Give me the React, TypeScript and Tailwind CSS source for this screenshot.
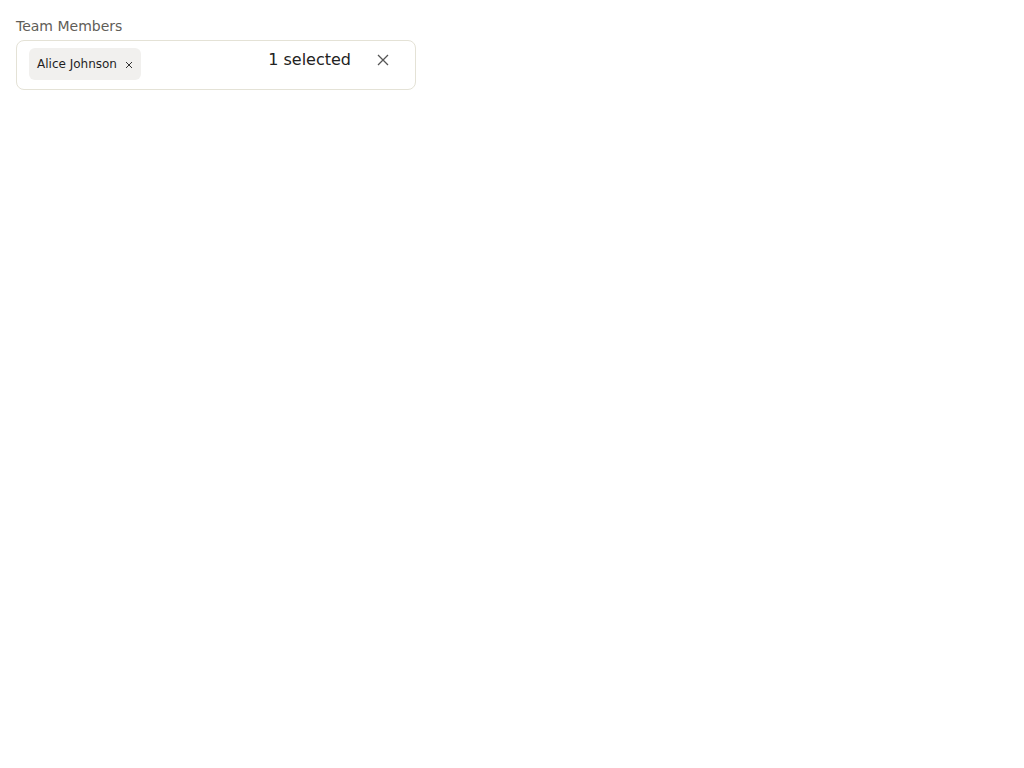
import { useState } from "react";

interface Member {
  id: string;
  name: string;
}

export default function App() {
  const [selected, setSelected] = useState<Member[]>([{ id: "alice", name: "Alice Johnson" }]);

  const remove = (id: string) => setSelected(selected.filter((m) => m.id !== id));

  return (
    <main className="min-h-screen bg-white p-4 font-['DejaVu_Sans',sans-serif]">
      <div className="w-[400px]">
        <label className="block text-sm leading-5 text-[#5f5d58] mb-1">Team Members</label>

        {/* Multi-select field */}
        <div className="flex items-start h-[50px] rounded-lg border border-[#e4e2d6] bg-white pl-3 pr-[26px]">
          <div className="flex flex-wrap gap-1 pt-[7px]">
            {selected.map((m) => (
              <span
                key={m.id}
                className="flex items-center h-8 rounded-md bg-[#f1f0ee] px-2 pb-px text-xs text-[#1f1f1f]"
              >
                {m.name}
                <button onClick={() => remove(m.id)} className="ml-2 mt-[2px] text-[#333]">
                  <svg width="8" height="8" viewBox="0 0 8 8" fill="none" stroke="currentColor" strokeWidth="1">
                    <path d="M1 1l6 6M7 1L1 7" />
                  </svg>
                </button>
              </span>
            ))}
          </div>
          <div className="flex-1" />
          <div className="flex items-center h-[38px]">
            <span className="text-base text-[#222]">{selected.length} selected</span>
            <button onClick={() => setSelected([])} className="ml-[26px] text-[#555]">
              <svg width="12" height="12" viewBox="0 0 12 12" fill="none" stroke="currentColor" strokeWidth="1.3">
                <path d="M1 1l10 10M11 1L1 11" />
              </svg>
            </button>
          </div>
        </div>
      </div>
    </main>
  );
}
